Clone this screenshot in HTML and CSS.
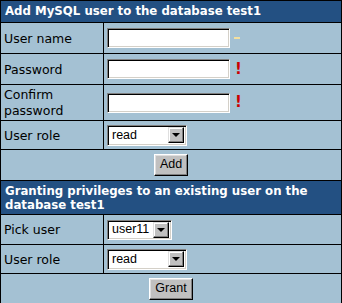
FILE: index.html
```html
<!DOCTYPE html>
<html>
<head>
<meta charset="utf-8">
<link rel="stylesheet" href="styles.css">
</head>
<body>
<table class="form">
  <colgroup><col class="c-label"><col class="c-value"></colgroup>
  <tr><th colspan="2" class="head">Add MySQL user to the database test1</th></tr>
  <tr class="r-std">
    <td class="label">User name</td>
    <td class="value"><span class="field"><span class="textbox"></span><span class="mark ok"></span></span></td>
  </tr>
  <tr class="r-std">
    <td class="label">Password</td>
    <td class="value"><span class="field"><span class="textbox"></span><span class="mark err">!</span></span></td>
  </tr>
  <tr class="r-tall">
    <td class="label">Confirm<br>password</td>
    <td class="value"><span class="field"><span class="textbox"></span><span class="mark err">!</span></span></td>
  </tr>
  <tr class="r-sel">
    <td class="label">User role</td>
    <td class="value"><span class="select w-role"><span class="sel-text">read</span><span class="sel-btn"><span class="arrow"></span></span></span></td>
  </tr>
  <tr class="r-act"><td colspan="2" class="actions"><span class="btn">Add</span></td></tr>
  <tr><th colspan="2" class="head head2">Granting privileges to an existing user on the database test1</th></tr>
  <tr class="r-pick">
    <td class="label">Pick user</td>
    <td class="value"><span class="select w-user"><span class="sel-text">user11</span><span class="sel-btn"><span class="arrow"></span></span></span></td>
  </tr>
  <tr class="r-sel">
    <td class="label">User role</td>
    <td class="value"><span class="select w-role"><span class="sel-text">read</span><span class="sel-btn"><span class="arrow"></span></span></span></td>
  </tr>
  <tr class="r-act"><td colspan="2" class="actions"><span class="btn">Grant</span></td></tr>
</table>
</body>
</html>
```
FILE: styles.css
```css
body {
  margin: 0;
  font-family: "DejaVu Sans", Verdana, sans-serif;
  font-size: 12.5px;
  background: #fff;
}
.form {
  width: 342px;
  border-collapse: collapse;
  table-layout: fixed;
  background: #a4c1d3;
  border: 1px solid #000;
}
.c-label { width: 103px; }
.form td, .form th {
  border: 1px solid #000;
  padding: 0 3px;
  line-height: 15px;
  color: #000;
}
.head {
  background: #235082;
  color: #fff !important;
  text-align: left;
  font-weight: bold;
  font-size: 11.75px;
  height: 21px;
  padding: 0 4px !important;
}
.head2 {
  height: 33px;
  line-height: 14px !important;
}
.r-std td { height: 30px; }
.r-tall td { height: 34px; }
.r-tall .label { line-height: 16px; padding-top: 1px; }
.r-sel td { height: 28px; }
.r-pick td { height: 29px; }
.r-act td { height: 30px; }
.label { vertical-align: middle; }
.value { vertical-align: middle; }
.field {
  display: flex;
  align-items: center;
  gap: 3px;
}
.textbox {
  display: block;
  width: 121px;
  height: 18px;
  background: #fff;
  border-top: 1px solid #808080;
  border-left: 1px solid #808080;
  border-right: 1px solid #fff;
  border-bottom: 1px solid #fff;
  box-shadow: inset 1px 1px 0 #000, inset -1px -1px 0 #d4d0c8;
}
.mark {
  font-weight: bold;
}
.mark.ok {
  display: block;
  width: 6px;
  height: 2px;
  margin-left: 1px;
  background: #f3df9f;
}
.mark.err {
  color: #cc0000;
  font-size: 15px;
  margin-left: 2px;
}
.select {
  display: flex;
  align-items: center;
  height: 21px;
  box-sizing: border-box;
  background: #fff;
  border-top: 1px solid #808080;
  border-left: 1px solid #808080;
  border-right: 1px solid #fff;
  border-bottom: 1px solid #fff;
  box-shadow: inset 1px 1px 0 #000, inset -1px -1px 0 #d4d0c8;
  padding: 2px 2px 2px 4px;
  font-family: "Liberation Sans", Arial, sans-serif;
  font-size: 12.5px;
}
.r-pick .select { height: 20px; }
.w-role { width: 80px; }
.w-user { width: 65px; }
.sel-text { flex: 1; white-space: nowrap; }
.sel-btn {
  flex: none;
  display: flex;
  align-items: center;
  justify-content: center;
  width: 16px;
  height: 16px;
  box-sizing: border-box;
  background: #c0c0c0;
  border-top: 1px solid #dfdfdf;
  border-left: 1px solid #dfdfdf;
  border-right: 1px solid #000;
  border-bottom: 1px solid #000;
  box-shadow: inset -1px -1px 0 #808080, inset 1px 1px 0 #fff;
}
.arrow {
  width: 0;
  height: 0;
  border-left: 4px solid transparent;
  border-right: 4px solid transparent;
  border-top: 4px solid #000;
}
.actions {
  text-align: center;
  vertical-align: middle;
}
.btn {
  display: inline-block;
  vertical-align: middle;
  box-sizing: border-box;
  height: 22px;
  line-height: 19px;
  padding: 0 5px;
  background: #c0c0c0;
  border-top: 1px solid #fff;
  border-left: 1px solid #fff;
  border-right: 1px solid #000;
  border-bottom: 1px solid #000;
  box-shadow: inset -1px -1px 0 #808080, inset 1px 1px 0 #dfdfdf;
  font-family: "Liberation Sans", Arial, sans-serif;
  font-size: 12.5px;
  color: #000;
}
```
